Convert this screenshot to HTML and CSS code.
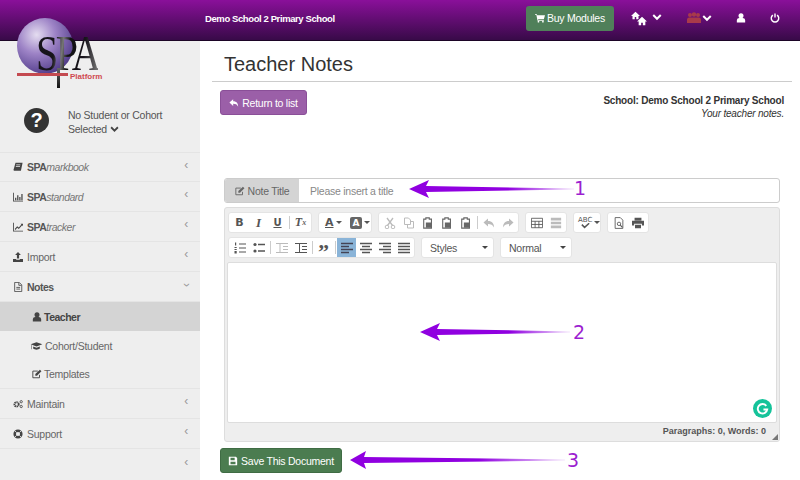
FILE: index.html
```html
<!DOCTYPE html>
<html lang="en">

<head>
    <meta charset="UTF-8">
    <title>Teacher Notes</title>
    <link rel="stylesheet" href="styles.css">
</head>

<body>
    <svg class="defs" width="0" height="0">
        <defs>
            <radialGradient id="ball" cx="35%" cy="30%" r="75%">
                <stop offset="0" stop-color="#e4dcf0" />
                <stop offset="0.45" stop-color="#9d83c6" />
                <stop offset="1" stop-color="#4f3a88" />
            </radialGradient>
            <linearGradient id="tail" x1="0" x2="1" y1="0" y2="0">
                <stop offset="0" stop-color="#9000e0" />
                <stop offset="0.6" stop-color="#9000e0" />
                <stop offset="1" stop-color="#9000e0" stop-opacity="0.1" />
            </linearGradient>
            <symbol id="i-down" viewBox="0 0 12 8"><path d="M1.5 1 6 5.500 10.500 1" fill="none" stroke="currentColor" stroke-width="2.400" /></symbol>
            <symbol id="i-user" viewBox="0 0 12 12"><circle cx="6" cy="3.400" r="3" /><path d="M1 11.500V9c0-2 1.500-3 3-3h4c1.500 0 3 1 3 3v2.500z" /></symbol>
            <symbol id="i-home" viewBox="0 0 12 12"><path d="M6 1 0 6.500h2V11h3V8h2v3h3V6.500h2z" /></symbol>
            <symbol id="i-book" viewBox="0 0 12 12"><path d="M3 1h8.500L9.500 10.500H1.500C.5 10.500.5 8.500 1 8zM3.800 3v1h5V3zM3.400 5v1h5V5z" fill-rule="evenodd" /></symbol>
            <symbol id="i-bars" viewBox="0 0 12 12"><path d="M0 1h1v9.500h11v1H0zM2.500 7h1.500v3H2.500zM5 4h1.500v6H5zM7.500 6H9v4H7.500zM10 2.500h1.500V10H10z" /></symbol>
            <symbol id="i-line" viewBox="0 0 12 12"><path d="M0 1h1v9.500h11v1H0zM2 8.500 5 5l2 1.500L10 3 9 2h3v3l-1-1-4 4.500-2-1.500-2 2.500z" /></symbol>
            <symbol id="i-upload" viewBox="0 0 12 12"><path d="M6 0 9.500 3.500H7.300v4.200H4.700V3.500H2.500zM0 8.500h3.800v.8h4.400v-.8H12V12H0z" /></symbol>
            <symbol id="i-file" viewBox="0 0 12 12"><path d="M2 .5h5.500L10.500 3.500v8H2zM7 1v3h3M4 6.500h4.500M4 8.500h4.500" fill="none" stroke="currentColor" stroke-width="1" /></symbol>
            <symbol id="i-cap" viewBox="0 0 14 12"><path d="M7 1.500 14 4 7 6.500 0 4zM3 6.500 7 8l4-1.500V9c-2 1.800-6 1.800-8 0zM1 5v5H.4V4.800z" /></symbol>
            <symbol id="i-edit" viewBox="0 0 12 12"><path d="M9 7v3.500H1v-8h6" fill="none" stroke="currentColor" stroke-width="1.100" /><path d="M4 6 9.500.8l1.800 1.800L6 8H4z" /></symbol>
            <symbol id="i-cogs" viewBox="0 0 14 12"><circle cx="5" cy="6.500" r="3" fill="none" stroke="currentColor" stroke-width="2.600" stroke-dasharray="1.800 .7" /><circle cx="11.500" cy="2.800" r="1.600" fill="none" stroke="currentColor" stroke-width="1.200" /><circle cx="11.500" cy="9.500" r="1.600" fill="none" stroke="currentColor" stroke-width="1.200" /></symbol>
            <symbol id="i-life" viewBox="0 0 12 12"><path d="M6 .5a5.500 5.500 0 1 0 0 11 5.500 5.500 0 0 0 0-11zM6 3.500a2.500 2.500 0 1 1 0 5 2.500 2.500 0 0 1 0-5z" fill-rule="evenodd" /><path d="M2 2l2.300 2.300M10 2 7.700 4.300M2 10l2.300-2.300M10 10 7.700 7.700" stroke="#eee" stroke-width="1" /></symbol>
            <symbol id="i-reply" viewBox="0 0 12 12"><path d="M5 1.500 .5 5.500 5 9.500V7c3 0 4.500.8 6 3.500C11 6.500 9 4 5 4z" /></symbol>
            <symbol id="i-floppy" viewBox="0 0 12 12"><path d="M1 1h8.500L11 2.500V11H1zM3 2v3h5V2zM3 7v3h6V7z" fill-rule="evenodd" /></symbol>
            <symbol id="i-cart" viewBox="0 0 13 12"><path d="M0 1h2.500l.4 1.500H13L11.500 7.500H4l.3 1h7.200v1H3.300L1.800 2H0z" /><circle cx="4.500" cy="10.800" r="1.100" /><circle cx="10.300" cy="10.800" r="1.100" /></symbol>
            <symbol id="i-paste" viewBox="0 0 12 14"><path d="M1 2.500h2.500V1h4v1.500H10V13H1z" fill="none" stroke="currentColor" stroke-width="1.300" /><path d="M3.500 6.500h6v6h-6z" /></symbol>
        </defs>
    </svg>

    <header class="topbar">
        <span class="school-name">Demo School 2 Primary School</span>
        <a class="btn-buy"><svg class="ic"><use href="#i-cart" /></svg>Buy Modules</a>
        <span class="top-icons">
            <span class="top-item top-home">
                <svg class="home-small"><use href="#i-home" /></svg><svg class="home-big"><use href="#i-home" /></svg>
                <svg class="down"><use href="#i-down" /></svg>
            </span>
            <span class="top-item top-group">
                <svg class="paw" viewBox="0 0 14 12"><circle cx="3" cy="3" r="2" /><circle cx="11" cy="3" r="2" /><circle cx="7" cy="2.500" r="2.200" /><path d="M0 11V7.500c0-1 1-2 2-2h10c1 0 2 1 2 2V11z" /></svg>
                <svg class="down"><use href="#i-down" /></svg>
            </span>
            <svg class="top-user"><use href="#i-user" /></svg>
            <svg class="top-power" viewBox="0 0 12 12"><path d="M3.500 2.500a4.500 4.500 0 1 0 5 0" fill="none" stroke="#fff" stroke-width="1.700" /><path d="M6 .5v5" stroke="#fff" stroke-width="1.700" /></svg>
        </span>
    </header>

    <div class="page">
        <aside class="sidebar">
            <div class="cohort">
                <span class="help">?</span>
                <span class="cohort-text">No Student or Cohort<br>Selected <svg class="cohort-down"><use href="#i-down" /></svg></span>
            </div>
            <ul class="nav">
                <li><svg class="ic"><use href="#i-book" /></svg><span><b>SPA</b><i>markbook</i></span><em class="caret">‹</em></li>
                <li><svg class="ic"><use href="#i-bars" /></svg><span><b>SPA</b><i>standard</i></span><em class="caret">‹</em></li>
                <li><svg class="ic"><use href="#i-line" /></svg><span><b>SPA</b><i>tracker</i></span><em class="caret">‹</em></li>
                <li><svg class="ic"><use href="#i-upload" /></svg><span>Import</span><em class="caret">‹</em></li>
                <li class="open"><svg class="ic"><use href="#i-file" /></svg><span><b>Notes</b></span><em class="caret caret-down">‹</em></li>
                <li class="sub active"><svg class="ic"><use href="#i-user" /></svg><span><b>Teacher</b></span></li>
                <li class="sub"><svg class="ic ic-wide"><use href="#i-cap" /></svg><span>Cohort/Student</span></li>
                <li class="sub last"><svg class="ic"><use href="#i-edit" /></svg><span>Templates</span></li>
                <li><svg class="ic"><use href="#i-cogs" /></svg><span>Maintain</span><em class="caret">‹</em></li>
                <li><svg class="ic"><use href="#i-life" /></svg><span>Support</span><em class="caret">‹</em></li>
                <li class="collapse"><em class="caret">‹</em></li>
            </ul>
        </aside>

        <main class="content">
            <h1>Teacher Notes</h1>
            <div class="info-row">
                <a class="btn btn-purple"><svg class="ic"><use href="#i-reply" /></svg>Return to list</a>
                <p class="school-info"><b>School: Demo School 2 Primary School</b><br><i>Your teacher notes.</i></p>
            </div>

            <div class="title-group">
                <label><svg class="ic"><use href="#i-edit" /></svg>Note Title</label>
                <span class="placeholder">Please insert a title</span>
            </div>

            <div class="editor">
                <div class="toolbar">
                    <div class="tb-group">
                        <span class="tb tb-b">B</span><span class="tb tb-i">I</span><span class="tb tb-u">U</span><s></s><span class="tb tb-x">T<sub>x</sub></span>
                    </div>
                    <div class="tb-group">
                        <span class="tb tb-wide tb-a">A<u></u></span><span class="tb tb-wide"><span class="tb-abox">A</span><u></u></span>
                    </div>
                    <div class="tb-group tb-off">
                        <span class="tb"><svg viewBox="0 0 12 12"><circle cx="3" cy="10" r="1.800" fill="none" stroke="currentColor" /><circle cx="9" cy="10" r="1.800" fill="none" stroke="currentColor" /><path d="M3.500 8.500 9 1M8.500 8.500 3 1" stroke="currentColor" stroke-width="1.300" /></svg></span>
                        <span class="tb"><svg viewBox="0 0 12 12"><path d="M1.500 1h4l2 2v4.500h-6zM7 4.500h3.500V11h-6V8" fill="none" stroke="currentColor" /></svg></span>
                        <span class="tb tb-on"><svg viewBox="0 0 12 14"><use href="#i-paste" /></svg></span>
                        <span class="tb tb-on"><svg viewBox="0 0 12 14"><use href="#i-paste" /></svg></span>
                        <span class="tb tb-on"><svg viewBox="0 0 12 14"><use href="#i-paste" /></svg></span>
                        <s></s>
                        <span class="tb"><svg viewBox="0 0 12 12"><use href="#i-reply" /></svg></span>
                        <span class="tb tb-flip"><svg viewBox="0 0 12 12"><use href="#i-reply" /></svg></span>
                    </div>
                    <div class="tb-group">
                        <span class="tb"><svg viewBox="0 0 14 12"><path d="M.5.500h13v11H.5zM.5 4h13M.5 7.700h13M4.800 4v7.500M9.200 4v7.500" fill="none" stroke="currentColor" /></svg></span>
                        <span class="tb tb-off"><svg viewBox="0 0 14 12"><path d="M1 0h12v3H1zM1 4.500h12v3H1zM1 9h12v3H1z" /></svg></span>
                    </div>
                    <div class="tb-group">
                        <span class="tb tb-wide tb-abc"><span>ABC</span><svg viewBox="0 0 12 6"><path d="M2 1.500 5 4.500 10 0" fill="none" stroke="currentColor" stroke-width="1.600" /></svg><u></u></span>
                    </div>
                    <div class="tb-group">
                        <span class="tb"><svg viewBox="0 0 12 14"><path d="M1.500.700h6L10.500 3.700v9.600h-9z" fill="none" stroke="currentColor" /><circle cx="6" cy="8" r="2" fill="none" stroke="currentColor" /><path d="M7.500 9.500 10 12" stroke="currentColor" stroke-width="1.300" /></svg></span>
                        <span class="tb"><svg viewBox="0 0 14 12"><path d="M3 0h8v3H3zM0 3.500h14V9h-2.500V7h-9v2H0zM3.500 8h7v4h-7z" /></svg></span>
                    </div>
                    <div class="tb-break"></div>
                    <div class="tb-group">
                        <span class="tb"><svg viewBox="0 0 12 12"><path d="M5 2h7M5 6h7M5 10h7" stroke="currentColor" stroke-width="1.200" /><path d="M1 .5h1.200v3H1zM.5 5h2.200v1H.5zM.5 7h2.200v1H.5zM.5 9h2.200v2.500H.5z" /></svg></span>
                        <span class="tb"><svg viewBox="0 0 12 12"><circle cx="2" cy="2.500" r="1.600" /><circle cx="2" cy="9" r="1.600" /><path d="M5 2.500h7M5 9h7" stroke="currentColor" stroke-width="1.600" /></svg></span>
                        <s></s>
                        <span class="tb tb-off"><svg viewBox="0 0 12 12"><path d="M0 1.500h12M7 4.500h5M7 7.500h5M0 10.500h12M4 1v10" stroke="currentColor" /></svg></span>
                        <span class="tb"><svg viewBox="0 0 12 12"><path d="M0 1.500h12M7 4.500h5M7 7.500h5M0 10.500h12M4.500 1v10" stroke="currentColor" /></svg></span>
                        <s></s>
                        <span class="tb tb-quote">”</span>
                        <s></s>
                        <span class="tb active"><svg viewBox="0 0 12 12"><path d="M0 1.500h12M0 4.500h8M0 7.500h12M0 10.500h8" stroke="currentColor" stroke-width="1.300" /></svg></span>
                        <span class="tb"><svg viewBox="0 0 12 12"><path d="M0 1.500h12M2 4.500h8M0 7.500h12M2 10.500h8" stroke="currentColor" stroke-width="1.300" /></svg></span>
                        <span class="tb"><svg viewBox="0 0 12 12"><path d="M0 1.500h12M4 4.500h8M0 7.500h12M4 10.500h8" stroke="currentColor" stroke-width="1.300" /></svg></span>
                        <span class="tb"><svg viewBox="0 0 12 12"><path d="M0 1.500h12M0 4.500h12M0 7.500h12M0 10.500h12" stroke="currentColor" stroke-width="1.300" /></svg></span>
                    </div>
                    <div class="combo combo-styles">Styles<u></u></div>
                    <div class="combo combo-normal">Normal<u></u></div>
                </div>
                <div class="edit-area"></div>
                <div class="statusbar">Paragraphs: 0, Words: 0</div>
                <span class="resize"></span>
                <svg class="grammarly" viewBox="0 0 20 20"><circle cx="10" cy="10" r="10" fill="#15c39a" /><path d="M14 7.200A5 5 0 1 0 15 11h-4" fill="none" stroke="#fff" stroke-width="2" /></svg>
            </div>

            <a class="btn btn-green"><svg class="ic"><use href="#i-floppy" /></svg>Save This Document</a>
        </main>
    </div>

    <!-- logo overlaps the header -->
    <div class="logo">
        <svg class="logo-ball" viewBox="0 0 56 56"><circle cx="28" cy="28" r="28" fill="url(#ball)" /></svg>
        <span class="logo-spa">SPA</span>
        <span class="logo-stem"></span>
        <span class="logo-bar"></span>
        <span class="logo-platform">Platform</span>
    </div>

    <!-- annotation arrows -->
    <svg class="arrow arrow-1" viewBox="0 0 165 20"><path d="M0 10 20 1 17 7 165 9.500V10.500L17 13 20 19z" fill="url(#tail)" /></svg>
    <span class="num num-1">1</span>
    <svg class="arrow arrow-2" viewBox="0 0 150 20"><path d="M0 10 20 1 17 7 150 9.500V10.500L17 13 20 19z" fill="url(#tail)" /></svg>
    <span class="num num-2">2</span>
    <svg class="arrow arrow-3" viewBox="0 0 215 20"><path d="M0 10 16 1 14 7 215 9.500V10.500L14 13 16 19z" fill="url(#tail)" /></svg>
    <span class="num num-3">3</span>
</body>

</html>
```

FILE: styles.css
```css
* {
    padding: 0;
    margin: 0;
    box-sizing: border-box;
    list-style: none;
}

body {
    width: 800px;
    height: 480px;
    overflow: hidden;
    position: relative;
    background: #fff;
    font-family: "Liberation Sans", Arial, sans-serif;
    font-size: 11px;
    color: #333;
}

.defs {
    position: absolute;
}

.ic {
    width: 10px;
    height: 10px;
    fill: currentColor;
    flex: none;
}

/* top bar */
.topbar {
    height: 41px;
    padding-left: 205px;
    display: flex;
    align-items: center;
    background: linear-gradient(#8a109a, #380a48);
    border-bottom: 1px solid #1c0526;
    color: #fff;
}

.school-name {
    font-size: 9.500px;
    letter-spacing: -0.4px;
    font-weight: bold;
    width: 321px;
    margin-top: -3px;
}

.btn-buy {
    width: 88px;
    height: 25px;
    display: flex;
    align-items: center;
    justify-content: center;
    gap: 2px;
    background: #50805a;
    border-radius: 3px;
    font-size: 10.500px;
    letter-spacing: -0.25px;
    margin-top: -4px;
}

.top-icons {
    display: flex;
    align-items: center;
    height: 25px;
    margin-top: -4px;
    fill: #fff;
}

.top-item {
    display: flex;
    align-items: center;
    position: relative;
}

.down {
    width: 10px;
    height: 7px;
    color: #fff;
}

.top-home {
    width: 32px;
    height: 16px;
    margin-left: 17px;
}

.home-small {
    width: 9px;
    height: 9px;
    position: absolute;
    left: 0;
    top: 1px;
}

.home-big {
    width: 10px;
    height: 10px;
    position: absolute;
    left: 6px;
    top: 6px;
    stroke: #5a0c6c;
    stroke-width: 1px;
    paint-order: stroke;
}

.top-home .down {
    position: absolute;
    left: 21px;
    top: 4px;
}

.top-group {
    margin-left: 24px;
    gap: 1px;
}

.paw {
    width: 14px;
    height: 12px;
    fill: #a83a4a;
}

.top-user {
    width: 10px;
    height: 10px;
    margin-left: 24px;
}

.top-power {
    width: 10px;
    height: 10px;
    margin-left: 24px;
}

/* sidebar */
.page {
    display: flex;
    height: 439px;
}

.sidebar {
    width: 200px;
    flex: none;
    background: #eee;
}

.cohort {
    height: 112px;
    padding: 67px 0 0 24px;
    display: flex;
    gap: 19px;
    color: #555;
    line-height: 14px;
    font-size: 10.500px;
    letter-spacing: -0.25px;
    border-bottom: 1px solid #e4e4e4;
}

.help {
    width: 25px;
    height: 25px;
    border-radius: 50%;
    background: #333;
    color: #fff;
    font-size: 20px;
    font-weight: bold;
    line-height: 25px;
    text-align: center;
    flex: none;
}

.cohort-down {
    width: 9px;
    height: 7px;
    color: #444;
}

.nav li {
    height: 30px;
    padding: 0 13px;
    display: flex;
    align-items: center;
    gap: 4px;
    color: #666;
    border-bottom: 1px solid #e4e4e4;
    position: relative;
    fill: #444;
    font-size: 10.500px;
    letter-spacing: -0.25px;
}

.nav li:first-child {
    height: 29px;
}

.nav li .ic {
    color: #444;
}

.nav b {
    color: #555;
    letter-spacing: -0.5px;
}

.nav i {
    color: #777;
    letter-spacing: -0.5px;
}

.nav li.sub {
    height: 29px;
    padding-left: 32px;
    gap: 2px;
    border-bottom: 0;
}

.nav li.last {
    border-bottom: 1px solid #e4e4e4;
}

.nav li.active {
    background: #d4d4d4;
}

.nav li.active b {
    color: #444;
}

.nav .ic-wide {
    width: 13px;
    margin-left: -2px;
}

.nav li.collapse {
    border-bottom: 0;
}

.caret {
    margin-left: auto;
    margin-right: -1px;
    margin-top: -5px;
    font-style: normal;
    font-size: 12px;
    color: #999;
}

.caret-down {
    transform: rotate(-90deg);
    margin-top: -3px;
}

/* main */
.content {
    flex: 1;
    padding: 0 8px 0 12px;
    position: relative;
}

.content h1 {
    height: 41px;
    padding: 12px 0 0 12px;
    font-size: 20px;
    font-weight: normal;
    line-height: 22px;
    color: #333;
    border-bottom: 1px solid #ccc;
}

.info-row {
    display: flex;
    justify-content: space-between;
    padding: 8px 8px 0;
    height: 96px;
}

.btn {
    display: flex;
    align-items: center;
    justify-content: center;
    gap: 3px;
    height: 25px;
    border-radius: 3px;
    color: #fff;
    font-size: 10.500px;
    letter-spacing: -0.25px;
}

.btn-purple {
    width: 87px;
    background: #9b5fa8;
    border: 1px solid #8a4f98;
}

.btn-green {
    width: 122px;
    margin: 6px 0 0 8px;
    background: #4b7c50;
    border: 1px solid #3f6c44;
}

.school-info {
    text-align: right;
    font-size: 10px;
    letter-spacing: -0.2px;
    line-height: 13px;
    padding-top: 4px;
}

.title-group {
    display: flex;
    height: 25px;
    margin: 0 12px 4px;
    border: 1px solid #ccc;
    border-radius: 3px;
    overflow: hidden;
}

.title-group label {
    width: 74px;
    display: flex;
    align-items: center;
    justify-content: center;
    gap: 3px;
    background: #d4d4d4;
    color: #666;
    font-size: 10.500px;
    letter-spacing: -0.25px;
}

.placeholder {
    padding: 6px 0 0 11px;
    color: #888;
    font-size: 10.500px;
    letter-spacing: -0.25px;
}

/* editor */
.editor {
    height: 235px;
    margin: 0 12px;
    padding: 4px 2px 0;
    background: #eee;
    border: 1px solid #ddd;
    border-radius: 3px;
    position: relative;
}

.toolbar {
    height: 50px;
    padding-left: 1px;
    display: flex;
    flex-wrap: wrap;
    align-content: flex-start;
    column-gap: 6px;
    row-gap: 2px;
}

.tb-break {
    width: 100%;
}

.tb-group {
    height: 21px;
    display: flex;
    align-items: center;
    padding: 0 1px;
    background: #fff;
    border: 1px solid #e4e4e4;
    border-radius: 3px;
    color: #555;
}

.tb-group s {
    width: 1px;
    height: 13px;
    margin: 0 1.500px;
    background: #ccc;
}

.tb-off {
    color: #bbb;
}

.tb-off .tb-on {
    color: #666;
}

.tb {
    width: 19px;
    height: 19px;
    display: flex;
    align-items: center;
    justify-content: center;
    position: relative;
    font-family: "DejaVu Sans", sans-serif;
    font-size: 11px;
}

.tb svg {
    width: 12px;
    height: 12px;
    fill: currentColor;
}

.tb.active {
    background: #8ab4d8;
    color: #445;
    height: 19px;
}

.tb-b {
    font-weight: bold;
}

.tb-i {
    font-weight: bold;
    font-style: italic;
    font-family: "Liberation Serif", serif;
    font-size: 13px;
}

.tb-u {
    font-weight: bold;
    text-decoration: underline;
    font-size: 10px;
}

.tb-x {
    font-weight: bold;
    font-style: italic;
    font-family: "Liberation Serif", serif;
    font-size: 12px;
}

.tb-x sub {
    font-size: 8px;
    line-height: 0;
    color: #666;
}

.tb-wide {
    width: 25px;
    justify-content: flex-start;
    padding-left: 5px;
}

.tb-wide u {
    margin-left: 2px;
    border: 3px solid transparent;
    border-top-color: #555;
    border-bottom: 0;
}

.tb-a {
    font-weight: bold;
    font-size: 11px;
    text-decoration: underline;
}

.tb-abox {
    width: 12px;
    height: 12px;
    border-radius: 2px;
    background: #666;
    color: #fff;
    font-size: 9px;
    font-weight: bold;
    line-height: 12px;
    text-align: center;
}

.tb-flip svg {
    transform: scaleX(-1);
}

.tb-abc {
    width: 24px;
    padding-left: 3px;
}

.tb-abc > span {
    font-size: 7px;
    line-height: 8px;
    margin-top: -5px;
}

.tb-abc svg {
    width: 11px;
    height: 6px;
    position: absolute;
    left: 5px;
    top: 10px;
}

.tb-quote {
    font-family: "Liberation Serif", serif;
    font-size: 22px;
    font-weight: bold;
    line-height: 19px;
    padding-top: 7px;
}

.combo {
    height: 21px;
    padding-left: 8px;
    display: flex;
    align-items: center;
    justify-content: space-between;
    background: #fff;
    border: 1px solid #e4e4e4;
    border-radius: 3px;
    color: #555;
    font-size: 10.500px;
    letter-spacing: -0.25px;
}

.combo u {
    margin-right: 5px;
    border: 3px solid transparent;
    border-top-color: #444;
    border-bottom: 0;
}

.combo-styles {
    width: 73px;
}

.combo-normal {
    width: 72px;
}

.edit-area {
    height: 161px;
    background: #fff;
    border: 1px solid #ddd;
    border-radius: 2px;
}

.statusbar {
    height: 15px;
    padding: 3px 11px 0 0;
    text-align: right;
    color: #555;
    font-size: 9px;
    font-weight: bold;
}

.resize {
    position: absolute;
    right: 1px;
    bottom: 1px;
    border: 3px solid transparent;
    border-right-color: #777;
    border-bottom-color: #777;
}

.grammarly {
    position: absolute;
    right: 7px;
    bottom: 23px;
    width: 19px;
    height: 19px;
}

/* logo */
.logo {
    position: absolute;
    left: 17px;
    top: 18px;
    width: 90px;
    height: 72px;
}

.logo-ball {
    width: 56px;
    height: 56px;
    display: block;
}

.logo-spa {
    position: absolute;
    left: 19px;
    top: 17px;
    font-family: "Liberation Serif", serif;
    font-size: 40px;
    letter-spacing: -2.500px;
    line-height: 29px;
    transform: scaleY(1.250);
    transform-origin: top;
    background: linear-gradient(100deg, #17141b 0, #17141b 30%, #777 42%, #111 52%, #17141b 75%, #777 100%);
    -webkit-background-clip: text;
    background-clip: text;
    color: transparent;
}

.logo-stem {
    position: absolute;
    left: 40px;
    top: 50px;
    width: 3px;
    height: 20px;
    background: linear-gradient(#666, #111);
}

.logo-bar {
    position: absolute;
    left: 0;
    top: 55px;
    width: 51px;
    height: 3px;
    background: #c44a50;
}

.logo-platform {
    position: absolute;
    left: 53px;
    top: 54px;
    font-size: 8px;
    line-height: 9px;
    font-weight: bold;
    color: #d04a50;
}

/* annotations */
.arrow {
    position: absolute;
    height: 20px;
}

.arrow-1 {
    left: 409px;
    top: 179px;
    width: 165px;
}

.arrow-2 {
    left: 420px;
    top: 322px;
    width: 150px;
}

.arrow-3 {
    left: 350px;
    top: 450px;
    width: 215px;
}

.num {
    position: absolute;
    font-family: "DejaVu Sans", sans-serif;
    font-size: 19px;
    line-height: 20px;
    color: #9c1fd0;
}

.num-1 {
    left: 574px;
    top: 178px;
}

.num-2 {
    left: 573px;
    top: 322px;
}

.num-3 {
    left: 567px;
    top: 450px;
}
```
